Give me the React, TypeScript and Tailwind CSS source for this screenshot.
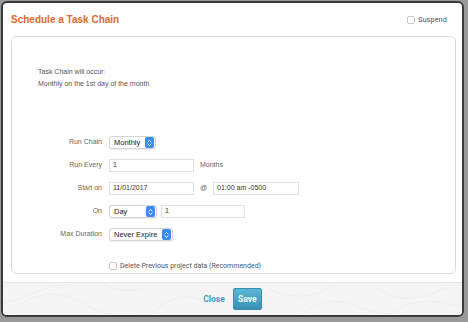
import React from "react";

const sans = { fontFamily: '"Liberation Sans", Arial, sans-serif' };
const roboto = { fontFamily: 'Roboto, "Liberation Sans", sans-serif' };

function Stepper() {
  return (
    <span className="ml-auto mr-[1px] flex h-[11px] w-[9px] items-center justify-center rounded-[2px] bg-[#3b8cf0]">
      <svg width="5" height="8" viewBox="0 0 5 8" fill="none" stroke="white" strokeWidth="1" strokeLinecap="round" strokeLinejoin="round">
        <path d="M1 3 L2.5 1.5 L4 3" />
        <path d="M1 5 L2.5 6.5 L4 5" />
      </svg>
    </span>
  );
}

function Select({ value, width }: { value: string; width: string }) {
  return (
    <div className={`flex h-[13px] items-center rounded-[3px] border border-[#d4d4d4] bg-white pl-[4px] text-[7.5px] text-[#222] shadow-[0_1px_1px_rgba(0,0,0,0.08)] ${width}`}>
      <span>{value}</span>
      <Stepper />
    </div>
  );
}

function Input({ value, width }: { value: string; width: string }) {
  return (
    <div className={`flex h-[13px] items-center border border-[#e0e0e0] bg-white pl-[3px] text-[7px] text-[#333] ${width}`}>
      {value}
    </div>
  );
}

function Row({ label, children }: { label: string; children: React.ReactNode }) {
  return (
    <div className="flex h-[13px] items-center">
      <div className="w-[90px] text-right text-[7px] text-[#666]">{label}</div>
      <div className="ml-[7px] flex items-center">{children}</div>
    </div>
  );
}

function Contours() {
  return (
    <svg className="absolute inset-0" width="458" height="31" viewBox="0 0 458 31" fill="none" stroke="#ececec" strokeWidth="0.8">
      <path d="M10 31 C 20 10, 60 5, 80 20 S 120 31, 130 31" />
      <path d="M0 20 C 30 14, 40 0, 70 2" />
      <path d="M150 31 C 160 15, 190 8, 200 20" />
      <path d="M260 0 C 270 12, 300 18, 320 8 S 340 0, 350 0" />
      <path d="M300 31 C 310 20, 330 14, 350 22 S 380 31, 390 31" />
      <path d="M370 0 C 380 15, 410 20, 430 10 S 450 5, 458 12" />
      <path d="M390 31 C 400 18, 430 14, 458 24" />
      <path d="M100 0 C 110 8, 130 10, 140 4" />
    </svg>
  );
}

export default function App() {
  return (
    <div className="h-[322px] w-[468px] bg-[#9a9a9a] pl-[1px] pt-[1px]" style={sans}>
      <div className="flex h-[316px] w-[463px] flex-col overflow-hidden rounded-[6px] border-2 border-[#3a3a3a] bg-white">
        <div className="flex h-[33px] shrink-0 items-center justify-between pl-[8px] pr-[15px]">
          <h1 className="text-[10px] font-bold text-[#e2692c]">Schedule a Task Chain</h1>
          <label className="flex items-center gap-[3px] text-[7.5px] text-[#555]" style={roboto}>
            <span className="h-[8px] w-[8px] rounded-[2px] border border-[#c8c8c8] bg-white" />
            Suspend
          </label>
        </div>

        <div className="ml-[8px] mr-[6px] flex h-[238px] shrink-0 flex-col rounded-[5px] border border-[#dcdcdc]">
          <div className="pl-[26px] pt-[29px] text-[7px] leading-[12px] text-[#555]">
            <p>Task Chain will occur:</p>
            <p>Monthly on the 1st day of the month</p>
          </div>

          <div className="mt-[46px] flex flex-col gap-[10px]">
            <Row label="Run Chain">
              <Select value="Monthly" width="w-[47px]" />
            </Row>
            <Row label="Run Every">
              <Input value="1" width="w-[85px]" />
              <span className="ml-[6px] text-[7px] text-[#666]">Months</span>
            </Row>
            <Row label="Start on">
              <Input value="11/01/2017" width="w-[85px]" />
              <span className="ml-[6px] mr-[6px] text-[7px] text-[#666]">@</span>
              <Input value="01:00 am -0500" width="w-[86px]" />
            </Row>
            <Row label="On">
              <Select value="Day" width="w-[48px]" />
              <div className="ml-[4px]">
                <Input value="1" width="w-[84px]" />
              </div>
            </Row>
            <Row label="Max Duration">
              <Select value="Never Expire" width="w-[64px]" />
            </Row>
          </div>

          <label className="ml-[97px] mt-[20px] flex items-center gap-[3px] text-[7px] text-[#555]" style={roboto}>
            <span className="h-[8px] w-[8px] rounded-[2px] border border-[#c8c8c8] bg-white" />
            Delete Previous project data (Recommended)
          </label>
        </div>

        <div className="relative mt-[8px] flex flex-1 items-center justify-center gap-[8px] border-t border-[#e6e6e6] bg-[#f5f5f5]">
          <Contours />
          <button className="relative text-[8.5px] font-bold text-[#3aa0c0]" style={roboto}>Close</button>
          <button
            className="relative flex h-[22px] w-[29px] items-center justify-center rounded-[2px] border border-[#3a8db0] bg-gradient-to-b from-[#5cb6d6] to-[#3a90b3] text-[8.5px] font-bold text-white"
            style={roboto}
          >
            Save
          </button>
        </div>
      </div>
    </div>
  );
}
